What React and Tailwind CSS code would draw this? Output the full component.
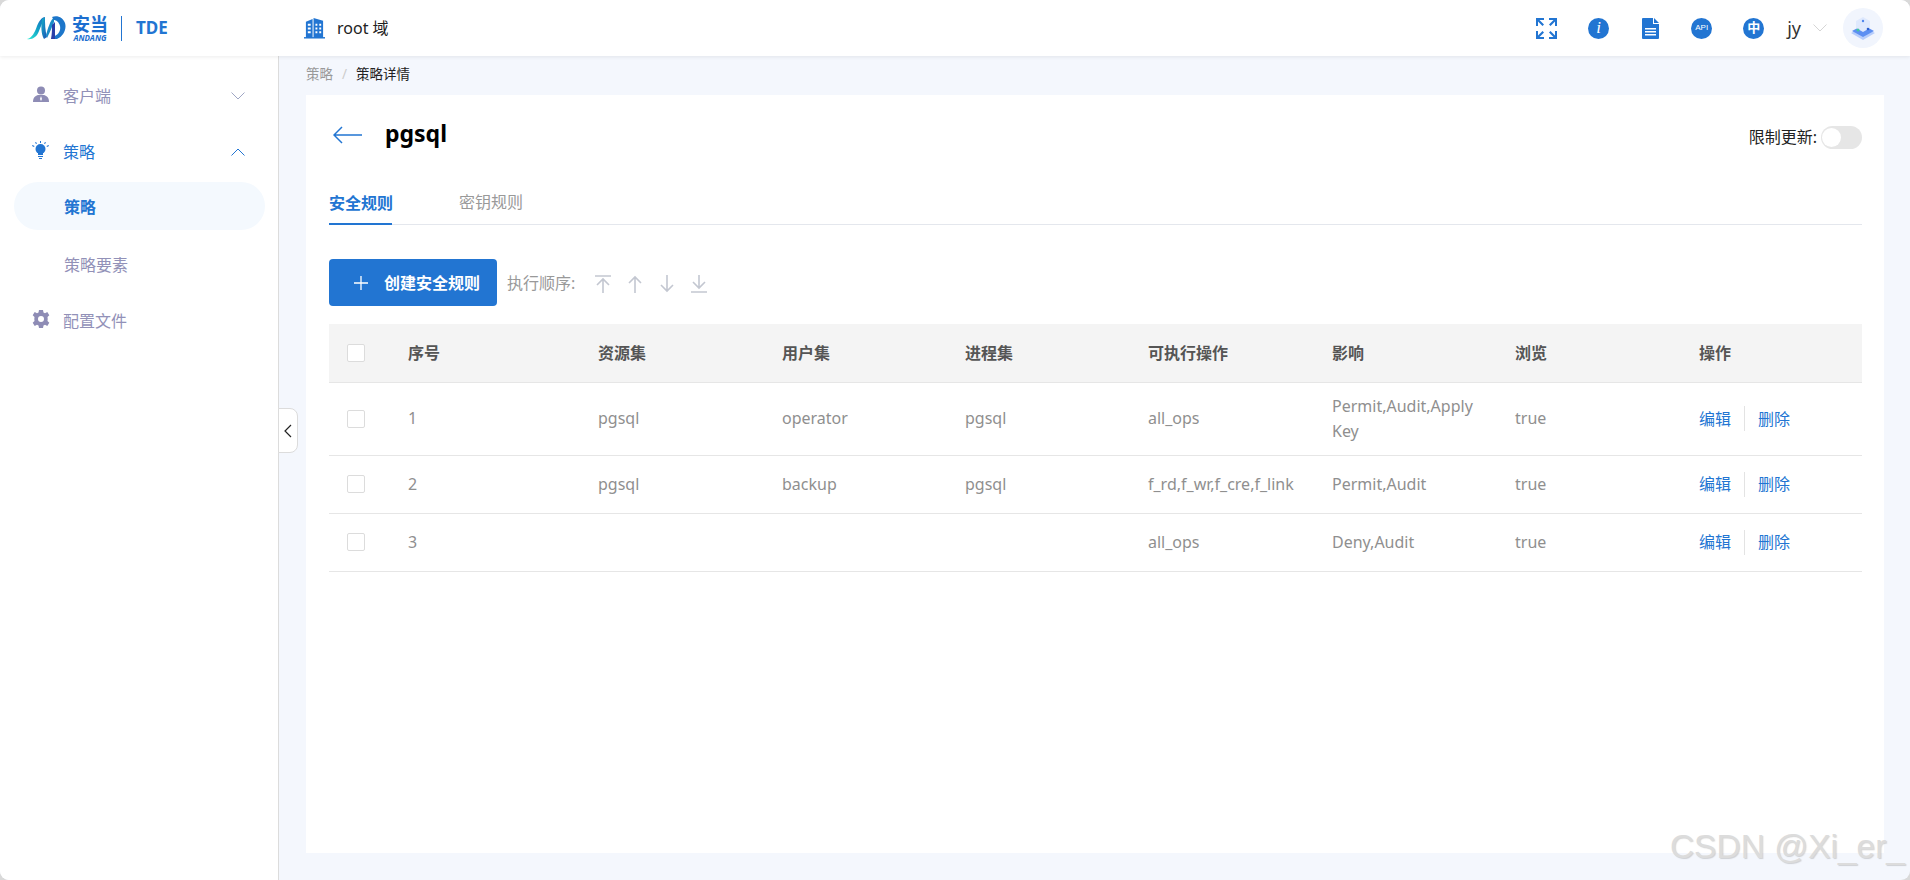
import React from "react";

function Logo() {
  return (
    <div className="flex items-center">
      <svg width="39" height="24" viewBox="0 0 39 24" className="block">
        <defs>
          <linearGradient id="lg1" x1="0" y1="1" x2="1" y2="0">
            <stop offset="0" stopColor="#33ecd8" />
            <stop offset="0.5" stopColor="#10a3c6" />
            <stop offset="1" stopColor="#1c62c2" />
          </linearGradient>
          <linearGradient id="lg2" x1="0" y1="0" x2="1" y2="1">
            <stop offset="0" stopColor="#12b2c8" />
            <stop offset="1" stopColor="#1f4fb5" />
          </linearGradient>
        </defs>
        <path d="M0 23 C5 22 8 16 10 10 C12 5 15 1 18 1 C16 5 14 10 12 15 C10 21 5 24 0 23 Z" fill="url(#lg1)" />
        <path d="M15 3 L18 1 C18 8 18 14 20 21 L17 23 C14 18 14 10 15 3 Z" fill="url(#lg2)" />
        <path d="M19 19 C21 12 23 5 27 1 L27 6 C25 11 23 16 20 22 Z" fill="#1a8cc8" />
        <path d="M25 1 C31 -1 36 2 38 7 C40 13 36 21 30 23 L27 23 L27 20 C31 19 34 15 33 10 C32 6 29 4 27 4 Z" fill="#1d76ca" />
        <path d="M25 9 L28 6 L28 23 L24 23 C25 18 25 13 25 9 Z" fill="#2a3fa8" />
      </svg>
      <div className="flex flex-col items-center ml-[6px]">
        <span className="text-[#1c6fd0] text-[18px] leading-[18px] font-bold">安当</span>
        <span className="text-[#1c6fd0] text-[8px] leading-[8px] mt-[1px] font-bold italic">ANDANG</span>
      </div>
    </div>
  );
}

function BuildingIcon() {
  return (
    <svg width="21" height="21" viewBox="0 0 22 22" className="block shrink-0">
      <path d="M2 4 L9 1 L9 21 L2 21 Z M10 0 L20 3 L20 21 L10 21 Z" fill="#2275d2" />
      <path d="M0 20h22v1.500H0z" fill="#2275d2" />
      <path d="M4 6h3v2H4zM4 10h3v2H4zM4 14h3v2H4zM12 6h2v2h-2zM16 6h2v2h-2zM12 10h2v2h-2zM16 10h2v2h-2zM12 14h2v2h-2zM16 14h2v2h-2z" fill="#fff" />
    </svg>
  );
}

function HeaderIcons() {
  const blue = "#2275d2";
  return (
    <div className="flex items-center">
      <svg width="21" height="21" viewBox="0 0 21 21" className="block" fill={blue}>
        <path d="M0 0h8v2H3.500L8 6.500 6.500 8 2 3.500V8H0zM21 0v8h-2V3.500L14.500 8 13 6.500 17.500 2H13V0zM0 21v-8h2v4.500L6.500 13 8 14.500 3.500 19H8v2zM21 21h-8v-2h4.500L13 14.500 14.500 13 19 17.500V13h2z" />
      </svg>
      <div className="ml-[31px] w-[21px] h-[21px] rounded-full bg-[#2275d2] flex items-center justify-center text-white text-[17px] italic" style={{ fontFamily: '"Liberation Serif", serif' }}>i</div>
      <svg width="17" height="21" viewBox="0 0 17 21" className="block ml-[33px]">
        <path d="M1 0h10v6h6v14a1 1 0 0 1-1 1H1a1 1 0 0 1-1-1V1a1 1 0 0 1 1-1z" fill={blue} />
        <path d="M12 0l5 5h-5z" fill={blue} />
        <path d="M3 10h11v1.500H3zM3 13h11v1.500H3zM3 16h11v1.500H3z" fill="#fff" />
      </svg>
      <div className="ml-[32px] w-[21px] h-[21px] rounded-full bg-[#2275d2] flex items-center justify-center text-white text-[8px] font-medium" style={{ fontFamily: '"Liberation Sans", sans-serif' }}>API</div>
      <div className="ml-[31px] w-[21px] h-[21px] rounded-full bg-[#2275d2] flex items-center justify-center text-white text-[13px] font-bold">中</div>
    </div>
  );
}

function Avatar() {
  return (
    <div className="w-10 h-10 rounded-full bg-[#f1f5fd] flex items-center justify-center">
      <svg width="30" height="28" viewBox="0 0 30 28" className="block">
        <path d="M15 13 L27 19 L15 26 L3 19 Z" fill="#b7cdfb" />
        <path d="M15 11 L26 17 L15 23 L4 17 Z" fill="#5d8ff2" />
        <path d="M15 3 L22 7 L22 14 L15 18 L8 14 L8 7 Z" fill="#dfe9fd" />
        <circle cx="10" cy="16" r="1.500" fill="#43c59e" />
        <circle cx="20" cy="15" r="1.300" fill="#2a5fd0" />
        <circle cx="15" cy="7" r="1.200" fill="#4f86ee" />
      </svg>
    </div>
  );
}

function Chevron({ up, color }) {
  return (
    <svg width="14" height="8" viewBox="0 0 14 8" className="block" fill="none" stroke={color} strokeWidth="1">
      <path d={up ? "M0.500 7.500 L7 1 L13.500 7.500" : "M0.500 0.500 L7 7 L13.500 0.500"} />
    </svg>
  );
}

function UserIcon() {
  return (
    <svg width="16" height="16" viewBox="0 0 16 16" className="block">
      <circle cx="8" cy="4.500" r="4" fill="#8e8cb5" />
      <path d="M0 16 C0 11 3 9 6 9 L10 9 C13 9 16 11 16 16 Z" fill="#8e8cb5" />
      <path d="M8 10 L9 13 L8 15 L7 13 Z" fill="#fff" />
    </svg>
  );
}

function BulbIcon() {
  return (
    <svg width="17" height="19" viewBox="0 0 17 19" className="block">
      <circle cx="8.500" cy="8" r="5" fill="#2275d2" />
      <path d="M6 12h5v2H6z" fill="#2275d2" />
      <path d="M6 15h5v1H6zM7 17h3v1H7z" fill="#2275d2" />
      <path d="M8 0h1v2H8zM3 1.500l1-.5 1 1.500-1 .5zM14 1.500l-1-.5-1 1.500 1 .5zM0 5l.5-1 2 1-.5 1zM17 5l-.5-1-2 1 .5 1z" fill="#2275d2" />
    </svg>
  );
}

function GearIcon() {
  return (
    <svg width="18" height="18" viewBox="0 0 18 18" className="block">
      <path
        d="M7 0h4l.5 2.500 1.500.7L15.300 2l2 3.200-1.800 1.800.2 2-.2 2 1.800 1.800-2 3.200-2.300-1.200-1.500.7L11 18H7l-.5-2.500-1.500-.7L2.700 16l-2-3.200L2.500 11l-.2-2 .2-2L.7 5.200l2-3.200L5 3.200l1.500-.7z"
        fill="#8e8cb5"
      />
      <circle cx="9" cy="9" r="3" fill="#fff" />
    </svg>
  );
}

function Sidebar() {
  const purple = "text-[#9291b8]";
  return (
    <aside className="relative w-[279px] shrink-0 bg-white border-r border-[#dcdcdc] flex flex-col pt-[17px] pl-[14px] pr-[13px] text-[16px]">
      <div className="flex items-center h-[46px] pl-[19px] pr-[20px]">
        <div className="w-[16px] -mt-[4px]"><UserIcon /></div>
        <span className={`ml-[14px] flex-1 ${purple}`}>客户端</span>
        <Chevron color="#9fa6c4" />
      </div>
      <div className="flex items-center h-[46px] mt-[10px] pl-[18px] pr-[20px]">
        <div className="w-[17px] -mt-[4px]"><BulbIcon /></div>
        <span className="ml-[14px] flex-1 text-[#2275d2]">策略</span>
        <Chevron up color="#2275d2" />
      </div>
      <div className="flex items-center h-[48px] mt-[7px] pt-[2px] rounded-full bg-[#f4f9fe] pl-[50px] text-[#2275d2] font-bold">策略</div>
      <div className="flex items-center h-[46px] mt-[12px] pl-[50px] text-[#9291b8]">策略要素</div>
      <div className="flex items-center h-[46px] mt-[10px] pl-[18px]">
        <div className="w-[18px] -mt-[4px]"><GearIcon /></div>
        <span className={`ml-[13px] ${purple}`}>配置文件</span>
      </div>
      <button className="absolute left-[278px] top-[352px] w-[20px] h-[45px] bg-white border border-[#dcdcdc] rounded-r-lg flex items-center justify-center">
        <svg width="8" height="14" viewBox="0 0 8 14" fill="none" stroke="#222" strokeWidth="1.200" className="block">
          <path d="M7 1 L1 7 L7 13" />
        </svg>
      </button>
    </aside>
  );
}

function OrderIcons() {
  const c = "#c3c7d1";
  const Icon = ({ d }) => (
    <svg width="16" height="18" viewBox="0 0 16 18" fill="none" stroke={c} strokeWidth="1.600" className="block">
      <path d={d} />
    </svg>
  );
  return (
    <div className="flex items-center gap-[16px] ml-[20px] mt-[2px]">
      <Icon d="M0 1h16M8 18V4M2 10l6-6 6 6" />
      <Icon d="M8 18V2M2 8l6-6 6 6" />
      <Icon d="M8 0v16M2 10l6 6 6-6" />
      <Icon d="M8 0v13M2 7l6 6 6-6M0 17h16" />
    </div>
  );
}

function Checkbox() {
  return <span className="block w-[18px] h-[18px] bg-white border border-[#dcdcdc] rounded-[2px]" />;
}

const rows = [
  ["1", "pgsql", "operator", "pgsql", "all_ops", "Permit,Audit,Apply Key", "true"],
  ["2", "pgsql", "backup", "pgsql", "f_rd,f_wr,f_cre,f_link", "Permit,Audit", "true"],
  ["3", "", "", "", "all_ops", "Deny,Audit", "true"],
];
const heads = ["序号", "资源集", "用户集", "进程集", "可执行操作", "影响", "浏览", "操作"];

function RulesTable() {
  return (
    <table className="w-full table-fixed border-collapse text-[16px]">
      <colgroup>
        <col className="w-[79px]" />
        <col className="w-[190px]" />
        <col className="w-[184px]" />
        <col className="w-[183px]" />
        <col className="w-[183px]" />
        <col className="w-[184px]" />
        <col className="w-[183px]" />
        <col className="w-[184px]" />
        <col />
      </colgroup>
      <thead>
        <tr className="h-[58px] bg-[#f4f4f4] border-b border-[#e6e6e6]">
          <th className="pl-[18px] font-normal text-left"><Checkbox /></th>
          {heads.map((h) => (
            <th key={h} className="text-left font-bold text-[#555] pr-4">{h}</th>
          ))}
        </tr>
      </thead>
      <tbody>
        {rows.map((r, i) => (
          <tr key={r[0]} className={`border-b border-[#e6e6e6] text-[#8f8f8f] ${i === 0 ? "h-[73px]" : "h-[58px]"}`}>
            <td className="pl-[18px]"><Checkbox /></td>
            {r.map((c, j) => (
              <td key={j} className="pr-[28px] leading-[25px]">{c}</td>
            ))}
            <td>
              <div className="flex items-center text-[#2275d2]">
                <span>编辑</span>
                <span className="mx-[13px] w-px h-[25px] bg-[#e3e3e3]" />
                <span>删除</span>
              </div>
            </td>
          </tr>
        ))}
      </tbody>
    </table>
  );
}

export default function App() {
  return (
    <div
      className="relative w-[1910px] h-[880px] bg-[#d9d9d9] overflow-hidden"
      style={{ fontFamily: '"Noto Sans", "Noto Sans CJK SC", sans-serif' }}
    >
      <div className="w-full h-full rounded-[9px] overflow-hidden flex flex-col bg-[#f4f7fd]">
        <header className="h-[56px] shrink-0 bg-white shadow-[0_1px_4px_rgba(0,0,0,0.08)] relative z-10 flex items-center pl-[27px] pr-[27px]">
          <Logo />
          <span className="ml-[13px] w-px h-[25px] bg-[#2275d2]" />
          <span className="ml-[14px] w-[168px] text-[17px] font-bold text-[#2275d2]">TDE</span>
          <BuildingIcon />
          <span className="ml-[12px] flex-1 text-[16px] text-[#222]">root 域</span>
          <HeaderIcons />
          <span className="ml-[23px] text-[18px] text-[#333]">jy</span>
          <span className="ml-[12px]"><Chevron color="#d5d5d5" /></span>
          <span className="ml-[16px]"><Avatar /></span>
        </header>
        <div className="flex-1 flex min-h-0">
          <Sidebar />
          <main className="flex-1 min-w-0 flex flex-col pl-[27px] pr-[26px] pb-[27px]">
            <nav className="h-[39px] pb-[2px] shrink-0 flex items-center text-[13.500px]">
              <span className="text-[#999]">策略</span>
              <span className="mx-[9px] text-[#ccc]">/</span>
              <span className="text-[#222]">策略详情</span>
            </nav>
            <section className="flex-1 bg-white pl-[23px] pr-[22px] flex flex-col">
              <div className="flex items-center h-[40px] mt-[20px]">
                <svg width="29" height="18" viewBox="0 0 29 18" fill="none" stroke="#2275d2" strokeWidth="1.500" className="block ml-[4px]">
                  <path d="M29 9 H1 M9 1 L1 9 L9 17" />
                </svg>
                <h1 className="ml-[23px] flex-1 text-[23px] font-bold text-black -mt-[3px]">pgsql</h1>
                <span className="text-[16px] text-[#222] mt-[4px]">限制更新:</span>
                <span className="ml-[4px] w-[41px] h-[23px] rounded-full bg-[#e6e6e6] flex items-center pl-[1px] mt-[4px]">
                  <span className="w-[19px] h-[19px] rounded-full bg-white" />
                </span>
              </div>
              <div className="flex mt-[14px] h-[56px] items-end border-b border-[#e4e7ed] text-[16px]">
                <div className="h-[34px] -mb-px border-b-2 border-[#2275d2] text-[#2275d2] font-bold flex items-start w-[63px] whitespace-nowrap">安全规则</div>
                <div className="h-[34px] ml-[67px] text-[#999] flex items-start">密钥规则</div>
              </div>
              <div className="flex items-center mt-[34px]">
                <button className="w-[168px] h-[47px] rounded-[4px] bg-[#2275d2] text-white text-[16px] font-bold flex items-center pl-[24px]">
                  <svg width="16" height="16" viewBox="0 0 16 16" stroke="#fff" strokeWidth="1.300" className="block shrink-0">
                    <path d="M8 1v14M1 8h14" />
                  </svg>
                  <span className="ml-[15px] whitespace-nowrap">创建安全规则</span>
                </button>
                <span className="ml-[10px] text-[16px] text-[#999]">执行顺序:</span>
                <OrderIcons />
              </div>
              <div className="mt-[18px]">
                <RulesTable />
              </div>
            </section>
          </main>
        </div>
      </div>
      <div
        className="absolute right-[5px] bottom-[13px] text-[33.500px] leading-[40px] text-[#dcdcdc] pointer-events-none"
        style={{ fontFamily: '"Liberation Sans", sans-serif', textShadow: "1px 1px 1px rgba(120,120,120,0.3)" }}
      >
        CSDN @Xi_er_
      </div>
    </div>
  );
}
